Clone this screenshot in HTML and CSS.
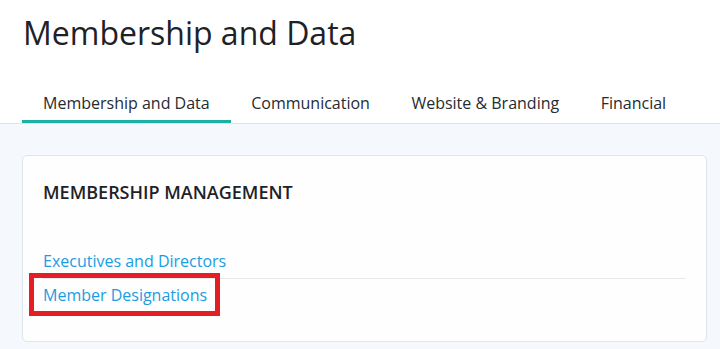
FILE: index.html
```html
<!DOCTYPE html>
<html lang="en">
<head>
<meta charset="utf-8">
<title>Membership and Data</title>
<link rel="stylesheet" href="styles.css">
</head>
<body>
<header class="page-header">
  <h1 class="page-title">Membership and Data</h1>
  <nav class="tabs">
    <a class="tab tab-active" href="#">Membership and Data</a>
    <a class="tab" href="#">Communication</a>
    <a class="tab" href="#">Website &amp; Branding</a>
    <a class="tab" href="#">Financial</a>
  </nav>
</header>
<main class="content">
  <section class="card">
    <h2 class="card-title">MEMBERSHIP MANAGEMENT</h2>
    <ul class="link-list">
      <li class="link-row"><a class="link" href="#">Executives and Directors</a></li>
      <li class="link-row"><a class="link link-highlight" href="#">Member Designations</a></li>
    </ul>
  </section>
</main>
</body>
</html>
```
FILE: styles.css
```css
* { box-sizing: border-box; }
html, body { margin: 0; padding: 0; }
body {
  font-family: "Open Sans", "Noto Sans", sans-serif;
  background: #f5f9fd;
  width: 720px;
  height: 349px;
  overflow: hidden;
}
.page-header {
  background: #ffffff;
  border-bottom: 1px solid #dce4ec;
  padding: 11px 0 0 22px;
}
.page-title {
  margin: 0 0 0 1px;
  font-size: 32px;
  line-height: 44px;
  font-weight: 400;
  color: #1e2228;
}
.tabs {
  display: flex;
  margin-top: 37px;
}
.tab {
  display: block;
  padding: 0 21px 6px;
  font-size: 16px;
  line-height: 22px;
  color: #262b31;
  text-decoration: none;
  border-bottom: 3px solid transparent;
}
.tab + .tab { margin-left: -0.5px; }
.tab-active { border-bottom-color: #1bb0a2; }
.content {
  padding: 31px 13px 7px 22px;
}
.card {
  background: #fefefe;
  border: 1px solid #dde5ed;
  border-radius: 5px;
  padding: 24px 20px 29px;
}
.card-title {
  margin: 0;
  font-size: 18px;
  line-height: 24px;
  font-weight: 600;
  color: #1e2228;
}
.link-list {
  list-style: none;
  margin: 41px 0 0;
  padding: 0;
}
.link-row {
  padding: 5px 0 6px;
  font-size: 16px;
  line-height: 22px;
}
.link-row + .link-row { border-top: 1px solid #e8eaec; }
.link {
  color: #1a9ce3;
  text-decoration: none;
}
.link-highlight {
  position: relative;
  display: inline-block;
}
.link-highlight::after {
  content: "";
  position: absolute;
  left: -14px;
  right: -13px;
  top: -11px;
  bottom: -10px;
  border: 5px solid #e31e24;
}
```
